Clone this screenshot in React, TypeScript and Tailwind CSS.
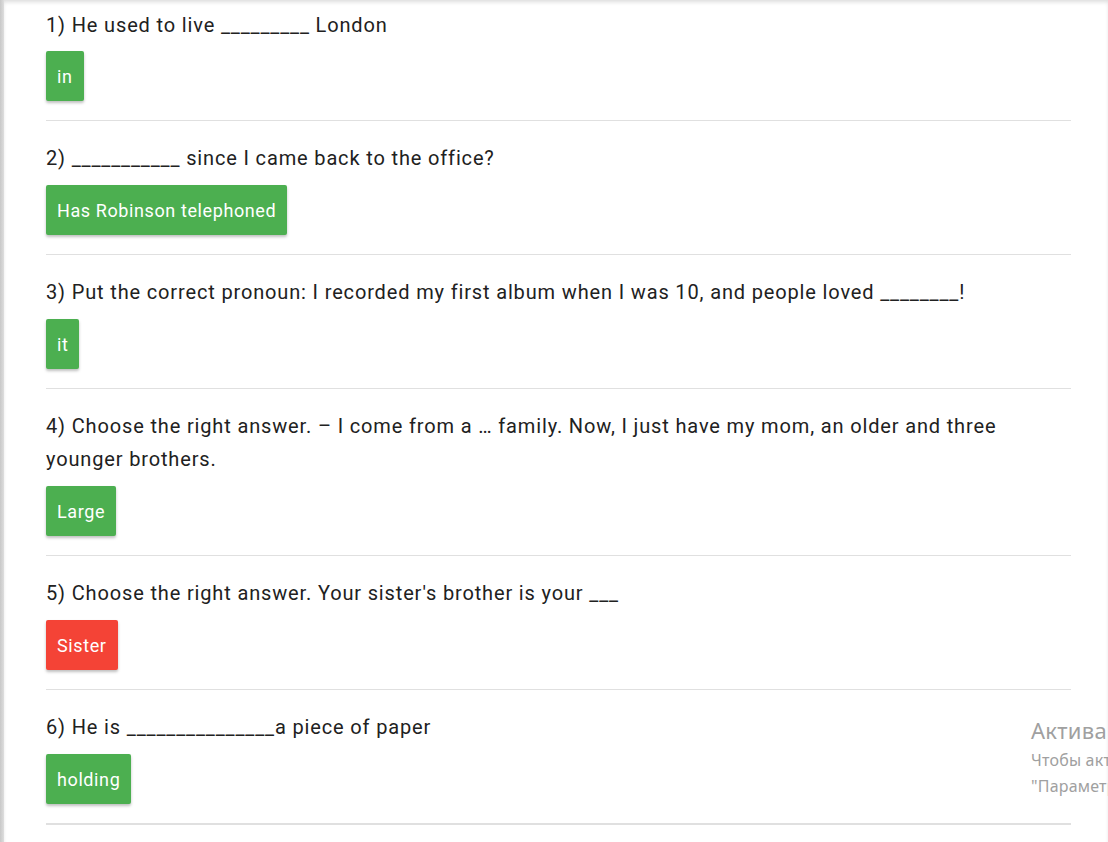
import React from 'react';

type Question = { text: string; answer: string; correct: boolean };

const QUESTIONS: Question[] = [
  { text: '1) He used to live _________ London', answer: 'in', correct: true },
  { text: '2) ___________ since I came back to the office?', answer: 'Has Robinson telephoned', correct: true },
  { text: '3) Put the correct pronoun: I recorded my first album when I was 10, and people loved ________!', answer: 'it', correct: true },
  { text: '4) Choose the right answer. – I come from a … family. Now, I just have my mom, an older and three younger brothers.', answer: 'Large', correct: true },
  { text: "5) Choose the right answer. Your sister's brother is your ___", answer: 'Sister', correct: false },
  { text: '6) He is _______________a piece of paper', answer: 'holding', correct: true },
];

export default function App() {
  return (
    <div className="relative flex min-h-[842px] w-full bg-white font-['Roboto',sans-serif] text-[#212121] overflow-hidden">
      {/* left edge of the window */}
      <div className="w-[4px] shrink-0 bg-gradient-to-r from-[#c8c8c8] to-[#dedede]" />

      <div className="flex-1 shadow-[inset_0_3px_4px_-1px_rgba(0,0,0,0.14)] pl-[42px] pr-[37px]">
        {QUESTIONS.map((q, i) => {
          const last = i === QUESTIONS.length - 1;
          return (
            <div
              key={i}
              className={`${i === 0 ? 'pt-[9px]' : 'pt-[21px]'} pb-[19px] ${last ? 'border-b-2' : 'border-b'} border-[#e0e0e0]`}
            >
              <p className="text-[20px] leading-[33px] tracking-[0.85px]">{q.text}</p>
              <button
                className={`${i === 0 ? 'mt-[9px]' : 'mt-[10px]'} h-[50px] px-[11px] rounded-[2px] text-white text-[18px] tracking-[0.6px] shadow-[0_2px_3px_rgba(0,0,0,0.25)] ${q.correct ? 'bg-[#4caf50]' : 'bg-[#f44336]'}`}
              >
                {q.answer}
              </button>
            </div>
          );
        })}
      </div>

      {/* Windows activation watermark */}
      <div className="absolute left-[1031px] top-[716px] whitespace-nowrap font-['Noto_Sans',sans-serif] text-[#a0a0a0] pointer-events-none">
        <div className="text-[22px] leading-[28px] tracking-[0.3px]">Активация Windows</div>
        <div className="text-[16px] leading-[32px] tracking-[0.2px]">Чтобы активировать Windows, перейдите в раздел</div>
        <div className="text-[16px] leading-[20px] tracking-[0.2px]">"Параметры".</div>
      </div>
    </div>
  );
}
